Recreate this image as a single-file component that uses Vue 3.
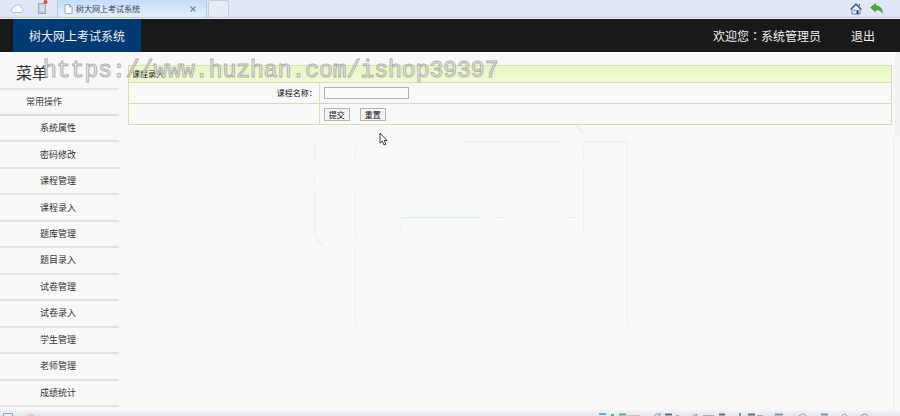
<script setup>
import { ref } from 'vue'

const menu = ['系统属性', '密码修改', '课程管理', '课程录入', '题库管理', '题目录入', '试卷管理', '试卷录入', '学生管理', '老师管理', '成绩统计']
const courseName = ref('')
</script>

<template>
  <div class="page">
    <div class="tabbar">
      <svg class="cloud" width="14" height="12" viewBox="0 0 14 12" aria-hidden="true">
        <path d="M3.5 10.5h7.5a2.3 2.3 0 0 0 .6-4.4A3.6 3.6 0 0 0 5 4.400A2.500 2.500 0 0 0 2.800 6.200 2.200 2.200 0 0 0 3.500 10.500z" fill="#f8faff" stroke="#b9c0d0" />
      </svg>
      <svg class="phone" width="12" height="16" viewBox="0 0 12 16" aria-hidden="true">
        <rect x="1.500" y="3.500" width="7" height="10" fill="#c3cbda" stroke="#a2aabd" />
        <path d="M3 6h4M3 8h4M3 10h4" stroke="#eef2fa" />
        <circle cx="8.500" cy="2" r="2" fill="#dc4a3c" />
      </svg>
      <div class="tab">
        <svg width="9" height="10" viewBox="0 0 9 10" aria-hidden="true">
          <path d="M1 .5h4.500L8 3v6.500H1zM5.500.5V3H8" fill="#fff" stroke="#a5adba" />
        </svg>
        <span class="tab-name">树大网上考试系统</span>
        <button class="close" type="button" aria-label="关闭">
          <svg width="6" height="6" viewBox="0 0 6 6"><path d="M.5.5l5 5M5.500.5l-5 5" stroke="#7d8592" stroke-width="1.200" /></svg>
        </button>
      </div>
      <button class="newtab" type="button" aria-label="新标签"></button>
      <div class="tools">
        <svg width="12" height="12" viewBox="0 0 12 12" aria-hidden="true">
          <path d="M2 6v5h8V6L6 2z" fill="#f5f8ff" stroke="#6879a0" />
          <path d="M.5 6.500L6 1l5.500 5.500" fill="none" stroke="#48659c" stroke-width="1.300" />
          <path d="M8.500 1h1.500v3z" fill="#35508a" />
          <path d="M6.500 7h2v4h-2z" fill="#263f7c" /><path d="M3.500 6.500h2v2h-2z" fill="#6d92cb" />
        </svg>
        <svg width="13" height="11" viewBox="0 0 13 11" aria-hidden="true">
          <path d="M.5 4.500L5.500.5v2.300c4 0 6.500 2 7 7.200-1.500-2.600-3.500-3.300-7-3.200V9z" fill="#49ab32" stroke="#378c28" stroke-width=".6" />
        </svg>
      </div>
    </div>

    <header class="header">
      <a class="brand" href="#">树大网上考试系统</a>
      <div class="account">
        <span>欢迎您<span class="colon">：</span>系统管理员</span>
        <a href="#">退出</a>
      </div>
    </header>

    <div class="body">
      <nav class="sidebar">
        <h1>菜单</h1>
        <h2>常用操作</h2>
        <ul>
          <li v-for="item in menu" :key="item"><a href="#">{{ item }}</a></li>
        </ul>
      </nav>

      <main class="content">
        <form @submit.prevent>
          <table>
            <thead>
              <tr><th colspan="2">课程录入</th></tr>
            </thead>
            <tbody>
              <tr>
                <td class="label"><label for="course">课程名称：</label></td>
                <td><input id="course" v-model="courseName" type="text"></td>
              </tr>
              <tr>
                <td class="label"></td>
                <td>
                  <div class="actions">
                    <button type="submit">提交</button>
                    <button type="reset">重置</button>
                  </div>
                </td>
              </tr>
            </tbody>
          </table>
        </form>
        <svg class="ghost" width="500" height="210" viewBox="0 0 500 210" fill="none" aria-hidden="true">
          <path d="M344.500 21.500h97M463 21.500h46" stroke="#ebedeb" />
          <path d="M195.500 22v20M195.500 58v7M195.500 72v42M197 118l7 8" stroke="#f0f1f2" stroke-width="2" />
          <path d="M236.500 28v12M236.500 72v46M236.500 127v76M508.500 22v184" stroke="#ebedeb" />
          <path d="M458 5l6 9M464.500 26v16M464.500 48v66" stroke="#ecf0f1" stroke-width="2" />
          <path d="M281 99l4-2M284 97.500h77M378 97.500h9M447 97.500h9" stroke="#d6edf1" />
          <path d="M281.500 100v16M40 60l5-3M75 53l6-5" stroke="#f0f1f1" />
        </svg>
        <svg class="pointer" width="9" height="14" viewBox="0 0 9 14" aria-hidden="true">
          <path d="M1 1v10l2.300-2 1.700 4 1.800-.8L5.200 8.500H8z" fill="#fff" stroke="#3d3d4a" />
        </svg>
      </main>
      <div class="gutter"><i></i><i></i></div>
      <div class="watermark">https://www.huzhan.com/ishop39397</div>
    </div>

    <footer class="status">
      <svg width="40" height="3" viewBox="0 0 40 3" fill="none" aria-hidden="true">
        <path d="M1.500 3V.5h9V3" stroke="#91a4b9" /><path d="M26 2h6" stroke="#e7c8c9" stroke-width="2" />
      </svg>
      <svg width="270" height="3" viewBox="0 0 270 3" fill="none" aria-hidden="true">
        <path d="M0 1h7" stroke="#72a7df" stroke-width="2" />
        <path d="M12 2h3M20 1.500h7" stroke="#55ae7c" stroke-width="2" />
        <path d="M28 2.500h13" stroke="#b6ccc6" />
        <path d="M55 3q2-3 7-2l-3 2M94 3l4-2v2M200 3q5-4 7 0M243 3q3-4 5 0M262 3q4-4 7 0" stroke="#8d96a9" />
        <path d="M66 1.500h7M120 1.500h6M149 1.500h7" stroke="#646d7b" stroke-width="2" />
        <path d="M77 2.500h3M104 2.500h11M158 2.500h6" stroke="#a6adb9" />
        <path d="M141 0v3M176 1.500h8M222 1.500h7" stroke="#8792a8" stroke-width="2" />
      </svg>
    </footer>
  </div>
</template>

<style>
body {
  margin: 0;
  background: #f8f8f8;
}
</style>

<style scoped>
.page {
  display: flex;
  flex-direction: column;
  min-height: 100vh;
  font-family: "Noto Sans CJK SC", sans-serif;
  color: #444;
}
a {
  color: inherit;
  text-decoration: none;
}
button,
input {
  box-sizing: border-box;
  margin: 0;
  padding: 0;
  font: inherit;
}
.tabbar {
  display: flex;
  height: 17px;
  background: #e1e7f6;
  border-bottom: 1px solid #c5c9d2;
  box-shadow: 0 1px #f2f4f8;
  margin-bottom: 1px;
}
.cloud {
  margin: 2px 0 0 10px;
}
.phone {
  margin-left: 13px;
}
.tab {
  display: flex;
  align-items: center;
  box-sizing: border-box;
  width: 150px;
  margin-left: 8px;
  padding: 0 10px 0 6px;
  border: solid #b9c5dc;
  border-width: 0 1px;
  background: linear-gradient(#c5ddf8, #e4effc);
}
.tab-name {
  flex: 1;
  margin-left: 3px;
  font-size: 8px;
  line-height: 16px;
  white-space: nowrap;
  color: #3c4350;
}
.close {
  display: flex;
  border: 0;
  background: none;
}
.newtab {
  width: 21px;
  height: 17px;
  margin-left: 1px;
  border: 1px solid #c5ccda;
  border-bottom: 0;
  border-radius: 2px 3px 0 0;
  background: #e6ebf8;
}
.tools {
  display: flex;
  align-items: center;
  gap: 8px;
  margin-left: auto;
  padding-right: 17px;
}
.header {
  display: flex;
  justify-content: space-between;
  padding: 0 25px 0 13px;
  background: #191919;
  color: #f0f0f0;
  font-size: 12px;
  line-height: 33px;
}
.brand {
  padding: 0 16px;
  background: #023a73;
}
.account {
  display: flex;
  gap: 30px;
}
.colon {
  font-family: "Noto Sans CJK TC", sans-serif;
}
.body {
  position: relative;
  display: flex;
  flex: 1;
}
.sidebar {
  display: flex;
  flex-direction: column;
  width: 119px;
  padding-bottom: 3px;
}
h1,
h2 {
  margin: 0;
  font-weight: 400;
}
h1 {
  padding: 4px 16px 0;
  border-bottom: 2px solid #e5e5e5;
  font-size: 16px;
  line-height: 32px;
  color: #333;
}
h2 {
  padding-left: 26px;
  border-bottom: 2px solid #dedede;
  font-size: 9px;
  line-height: 24px;
}
ul {
  display: flex;
  flex: 1;
  flex-direction: column;
  margin: 0;
  padding: 0;
  list-style: none;
}
li {
  display: flex;
  flex: 1;
  align-items: center;
  padding-left: 40px;
  border-bottom: 2px solid #e2e2e2;
  font-size: 9px;
  line-height: 24px;
  color: #333;
}
.content {
  position: relative;
  flex: 1;
  padding: 13px 1px 0 9px;
}
table {
  width: 100%;
  border-collapse: collapse;
  font-size: 8px;
  line-height: 16px;
  color: #111;
}
th,
td {
  height: 20px;
  padding: 0 4px;
  border: 1px solid #d8deb4;
  text-align: left;
}
th {
  height: 16px;
  padding: 0 3px;
  border-top-color: #cdeab0;
  background: linear-gradient(#e6f7c6, #f3f9d3);
  font-weight: 400;
}
.label {
  width: 25%;
  padding: 0 2px;
  text-align: right;
}
input {
  display: block;
  width: 85px;
  height: 12px;
  border: 1px solid #b0b0b0;
  background: #fbfaf7;
}
.actions {
  display: flex;
  gap: 10px;
}
.actions button {
  width: 26px;
  height: 13px;
  border: 1px solid #b5b5b5;
  background: #f4f4f4;
  font-size: 8px;
  line-height: 11px;
  color: #111;
}
.ghost {
  position: absolute;
  top: 68px;
  left: 0;
  overflow: visible;
}
.pointer {
  position: absolute;
  top: 80px;
  left: 260px;
}
.gutter {
  display: flex;
  flex-direction: column;
  gap: 2px;
  width: 7px;
}
.gutter i {
  flex: 1;
  border-left: 2px solid #f0f0f0;
}
.gutter i:first-child {
  flex: 0 0 84px;
  margin-left: 2px;
  border: 0;
  background: #f0f0f0;
}
.watermark {
  position: absolute;
  top: 3px;
  left: 43px;
  font: 23px/32px "Liberation Mono", monospace;
  color: #f8f8f866;
  -webkit-text-stroke: 1px #b0b0b0;
  white-space: nowrap;
  pointer-events: none;
}
.status {
  display: flex;
  justify-content: space-between;
  align-items: flex-end;
  height: 6px;
  padding: 0 31px 0 2px;
  background: linear-gradient(#f5f5f8, #e3e5ef);
}
</style>
